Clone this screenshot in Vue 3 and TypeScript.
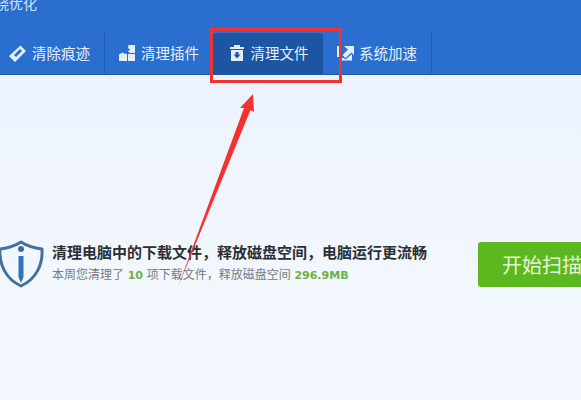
<template>
  <div class="page">
    <header class="header">
      <div class="title">晓优化</div>
      <nav class="nav">
        <div v-for="tab in tabs" :key="tab.label" class="tab" :class="[tab.cls, { active: tab.active }]">
          <svg class="tab-icon" viewBox="0 0 18 18" aria-hidden="true">
            <path v-for="(d, i) in tab.paths" :key="i" :d="d" fill="#e3eefa" fill-rule="evenodd" />
          </svg>
          <span>{{ tab.label }}</span>
        </div>
      </nav>
    </header>

    <main class="content">
      <div class="info">
        <svg class="shield" viewBox="0 0 46 48" aria-hidden="true">
          <path
            d="M22 2 C28 6 35 8 43 9 C44 25 37 39 22 46 C7 39 0 25 1 9 C9 8 16 6 22 2 Z"
            fill="none"
            stroke="#41719f"
            stroke-width="3"
            stroke-linejoin="round"
          />
          <circle cx="22" cy="9" r="3" fill="#3a6f9f" />
          <path d="M19.5 16 H24.5 V37 L22 43 L19.5 37 Z" fill="#2f73b8" />
        </svg>
        <div class="text">
          <div class="headline">清理电脑中的下载文件，释放磁盘空间，电脑运行更流畅</div>
          <div class="sub">
            本周您清理了 <b class="num">10</b> 项下载文件，释放磁盘空间 <b class="num">296.9MB</b>
          </div>
        </div>
        <button class="scan" type="button">开始扫描</button>
      </div>
    </main>

    <!-- annotation drawn over the screenshot -->
    <div class="mark-box" />
    <svg class="mark-arrow" viewBox="0 0 581 400" aria-hidden="true">
      <path d="M253 94 L254 112 L250.5 110 L178 287 L244 108 L240 108 Z" fill="#f5312f" />
    </svg>
  </div>
</template>

<script setup lang="ts">
interface Tab {
  label: string
  paths: string[]
  cls: string
  active?: boolean
}

const tabs: Tab[] = [
  {
    label: '清除痕迹',
    cls: 'tab-a',
    paths: ['M12.5 1.5 L18 7 L7 18 L1 12 Z M12 5 L6 11 L8 13 L14 7 Z'],
  },
  {
    label: '清理插件',
    cls: 'tab-b',
    paths: [
      'M10.5 1 H17 V9 H12 L10 7.5 L12 5.5 L10 4 Z',
      'M1 10.5 L4.5 8.5 L6 9.5 L9 10 V17 H1 Z',
      'M10 10 H17 V17 H10 Z',
    ],
  },
  {
    label: '清理文件',
    cls: 'tab-c',
    active: true,
    paths: ['M2 3 H16 V5 H2 Z M6 1 H12 V3 H6 Z', 'M3 6 H15 V17 H3 Z M7.5 8 V10.5 H5.5 L9 14.5 L12.5 10.5 H10.5 V8 Z'],
  },
  {
    label: '系统加速',
    cls: 'tab-d',
    paths: [
      'M1 2 H6 V4 H3 V13 H1 Z',
      'M8 2 H18 V11 L15.5 8.5 L9.5 14 L6.5 11 L12 5.5 Z',
      'M5 14 H8 L9.5 15.5 L16 10 V16.5 H5 Z',
    ],
  },
]
</script>

<style scoped>
.page {
  position: relative;
  display: flex;
  flex-direction: column;
  width: 581px;
  height: 400px;
  overflow: hidden;
  font-family: "Noto Sans CJK SC", "Liberation Sans", sans-serif;
  background: linear-gradient(180deg, #e9f1fc 0%, #f0f5fd 45%, #f5f8fe 100%);
}

.header {
  height: 75px;
  flex: none;
  box-sizing: border-box;
  background: #2a6ecf;
  border-bottom: 1px solid #1f5aa8;
}

.title {
  height: 25px;
  margin: -7px 0 15px -5px;
  color: #d3e4f8;
  font-size: 14px;
  line-height: 20px;
}

.nav {
  display: flex;
  height: 41px;
}

.tab {
  display: flex;
  align-items: center;
  justify-content: center;
  gap: 5px;
  flex: none;
  height: 100%;
  box-sizing: border-box;
  padding-bottom: 2px;
  border-right: 1px solid #1f5eb4;
  color: #e6f0fb;
  font-size: 14.5px;
}

.tab-a {
  width: 105px;
  padding-right: 6px;
  gap: 6px;
}

.tab-b {
  width: 108px;
}

.tab-c {
  width: 110px;
}

.tab-d {
  width: 109px;
  padding-right: 1px;
}

.tab.active {
  border-right: none;
  border-radius: 3px 3px 0 0;
  background: #1e55a3;
}

.tab-icon {
  width: 18px;
  height: 18px;
  flex: none;
}

.content {
  flex: 1;
  padding-top: 167px;
}

.info {
  display: flex;
  align-items: center;
  height: 45px;
}

.shield {
  width: 46px;
  height: 48px;
  flex: none;
  margin: -2px 0 0 -1px;
}

.text {
  align-self: flex-start;
  flex: none;
  width: 426px;
  margin-left: 7px;
}

.headline {
  margin-bottom: 2px;
  color: #2b2f33;
  font-size: 15px;
  font-weight: 700;
  line-height: 20px;
  white-space: nowrap;
}

.sub {
  color: #757b80;
  font-size: 12px;
  line-height: 20px;
  white-space: nowrap;
}

.num {
  margin: 0 1px;
  color: #6fb142;
  font-family: "DejaVu Sans", sans-serif;
  font-size: 11px;
  font-weight: 700;
}

.scan {
  flex: none;
  width: 130px;
  height: 45px;
  padding: 0 0 0 24px;
  border: none;
  border-radius: 3px;
  background: #5bb81f;
  color: #e6f5d6;
  font-family: inherit;
  font-size: 20px;
  text-align: left;
  white-space: nowrap;
}

.mark-box {
  position: absolute;
  left: 210px;
  top: 28px;
  width: 132px;
  height: 55px;
  box-sizing: border-box;
  border: 3px solid #ee3333;
}

.mark-arrow {
  position: absolute;
  left: 0;
  top: 0;
  width: 581px;
  height: 400px;
}
</style>
